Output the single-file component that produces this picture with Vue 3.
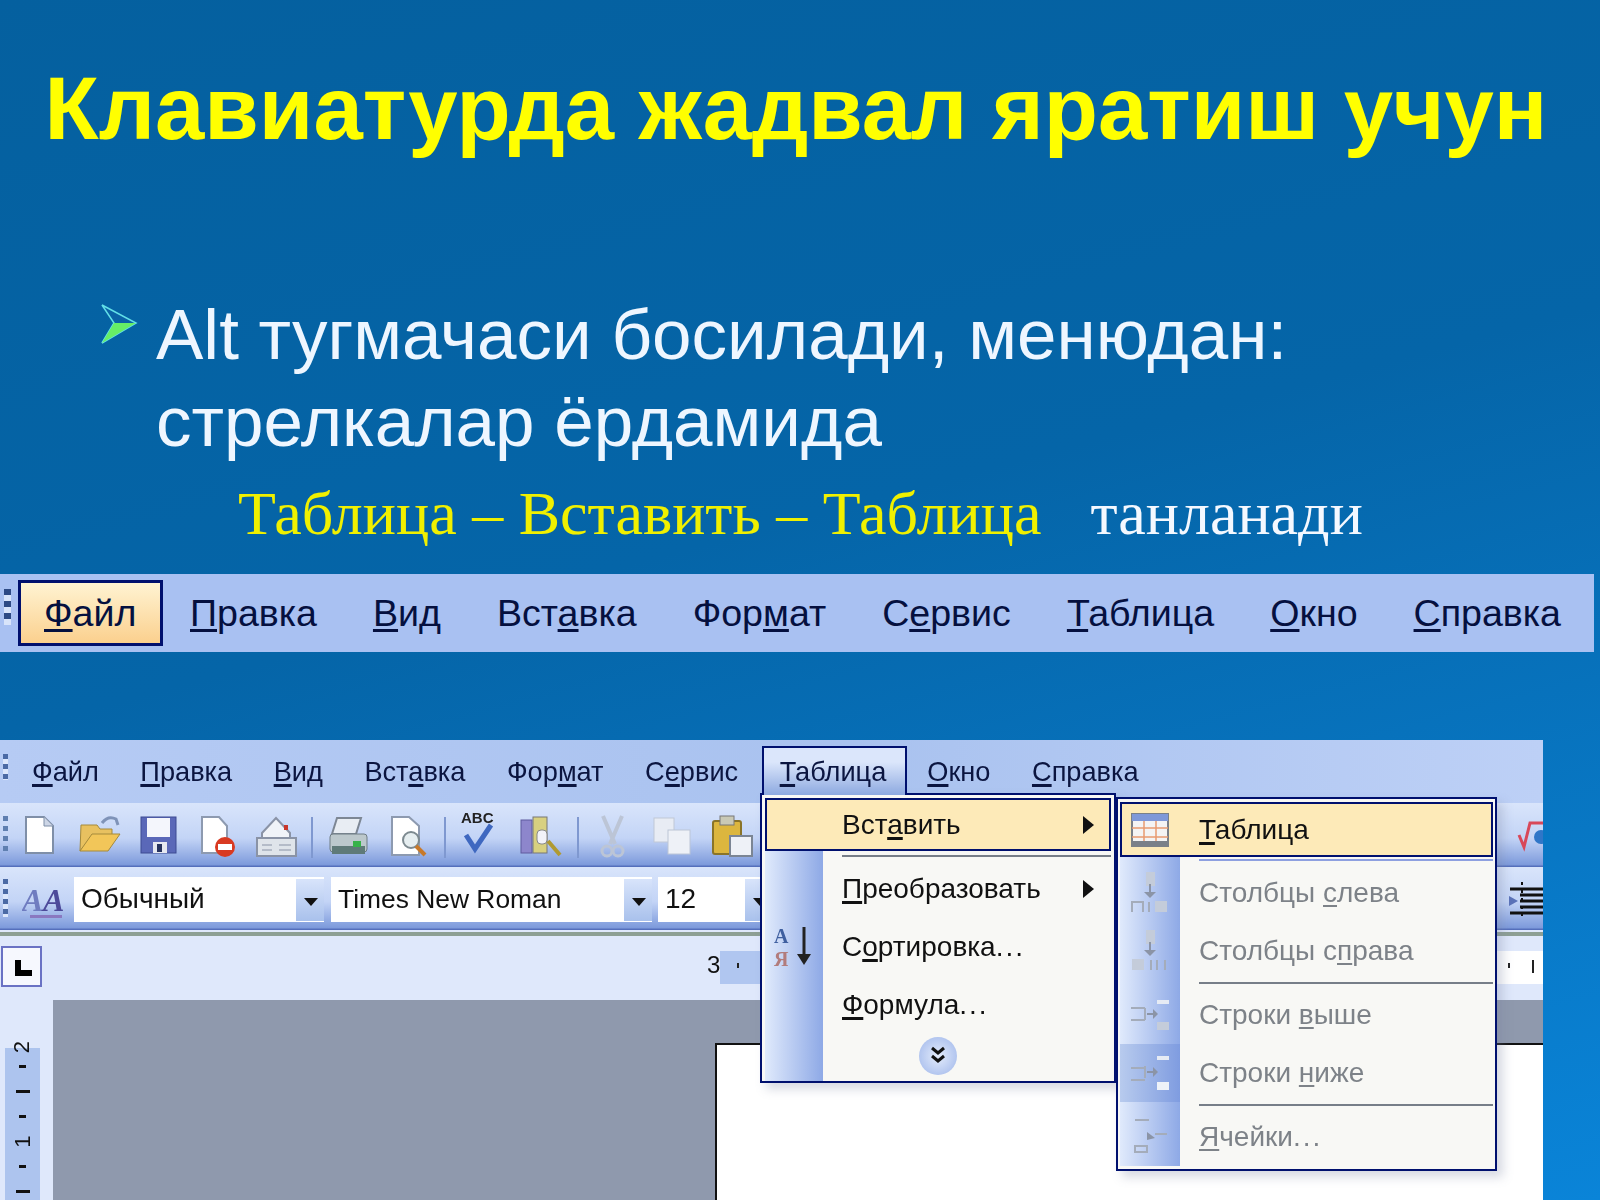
<template>
  <div class="slide">
    <h1 class="title">Клавиатурда жадвал яратиш учун</h1>

    <div class="bullet">
      <svg class="arrow" width="38" height="42" viewBox="0 0 38 42">
        <path d="M2 2 L36 20 L2 40 L14 20 Z" fill="#0a62a6" stroke="#62e0e8" stroke-width="1.5" />
        <path d="M2 40 L36 20 L14 20 Z" fill="#66ee66" />
      </svg>
      <p class="bullet-text">Alt тугмачаси босилади, менюдан:<br />стрелкалар ёрдамида</p>
    </div>

    <p class="sub">
      <span class="sub-yellow">Таблица – Вставить – Таблица</span>
      <span class="sub-white">танланади</span>
    </p>

    <nav class="big-menu">
      <span class="big-grip"></span>
      <span
        v-for="(m, i) in menuNames"
        :key="m.text"
        class="big-item"
        :class="{ active: i === 0 }"
      >{{ m.text.slice(0, m.u) }}<u>{{ m.text[m.u] }}</u>{{ m.text.slice(m.u + 1) }}</span>
    </nav>

    <section class="word">
      <div class="w-menubar">
        <span class="grip small"></span>
        <span
          v-for="m in menuNames"
          :key="m.text"
          class="w-item"
          :class="{ open: m.text === 'Таблица' }"
        >{{ m.text.slice(0, m.u) }}<u>{{ m.text[m.u] }}</u>{{ m.text.slice(m.u + 1) }}</span>
      </div>

      <div class="w-toolbar">
        <svg class="strip" width="1543" height="64" viewBox="0 0 1543 64">
          <g fill="#5f7fb0">
            <rect x="3" y="13" width="5" height="5" /><rect x="3" y="23" width="5" height="5" />
            <rect x="3" y="33" width="5" height="5" /><rect x="3" y="43" width="5" height="5" />
          </g>
          <!-- new -->
          <path d="M26 14h18l9 9v27H26z" fill="#fff" stroke="#7f8fa8" stroke-width="2" />
          <path d="M44 14v9h9" fill="#cdd6e6" stroke="#7f8fa8" />
          <!-- open -->
          <path d="M80 48l1-26h16l3 4h12v6H93z" fill="#e8c160" stroke="#a58a3c" />
          <path d="M80 48l12-17h28l-12 17z" fill="#f2c659" stroke="#a58a3c" />
          <path d="M102 20q6-8 14-4l2 6" fill="none" stroke="#7f93b8" stroke-width="3" />
          <!-- save -->
          <rect x="141" y="14" width="35" height="36" fill="#5a68b8" stroke="#3d4a92" />
          <rect x="147" y="15" width="23" height="19" fill="#f4f6fc" />
          <rect x="153" y="39" width="14" height="11" fill="#e6e8f0" /><rect x="157" y="41" width="5" height="8" fill="#26325e" />
          <!-- permission -->
          <path d="M202 14h17l8 9v27h-25z" fill="#fff" stroke="#8d9ab0" stroke-width="2" />
          <circle cx="225" cy="44" r="10" fill="#d93a22" /><rect x="218" y="41" width="14" height="6" fill="#fff" />
          <!-- mail -->
          <path d="M262 30l14-15 14 15v14h-28z" fill="#f0f3f8" stroke="#8a93a6" stroke-width="2" />
          <rect x="284" y="22" width="4" height="5" fill="#c9362c" />
          <rect x="257" y="35" width="39" height="18" fill="#dfe4ea" stroke="#8a93a6" stroke-width="2" />
          <path d="M262 42h10M262 47h10M279 42h12M279 47h12" stroke="#8a93a6" />
          <!-- sep -->
          <path d="M312 14v41M445 14v41M578 14v41" stroke="#7f98d0" stroke-width="2" />
          <!-- print -->
          <path d="M337 15h24l-5 16h-24z" fill="#e8edf3" stroke="#7d8794" stroke-width="2" />
          <rect x="330" y="31" width="37" height="18" rx="3" fill="#bcc8cc" stroke="#6f7c84" />
          <rect x="332" y="43" width="33" height="8" fill="#5f7a78" /><rect x="353" y="38" width="8" height="6" fill="#38b24a" />
          <!-- preview -->
          <path d="M392 14h17l10 9v29h-27z" fill="#fff" stroke="#8d9ab0" stroke-width="2" />
          <circle cx="411" cy="37" r="8" fill="#e6eef0" stroke="#7d8a90" stroke-width="2" />
          <path d="M416 43l9 9" stroke="#c8792a" stroke-width="4" />
          <!-- spell -->
          <text x="461" y="20" class="abc">ABC</text>
          <path d="M466 32l9 14 16-24" fill="none" stroke="#3f68c0" stroke-width="5" />
          <!-- research -->
          <rect x="521" y="17" width="11" height="33" fill="#8d86cc" stroke="#5f5a9e" />
          <rect x="533" y="14" width="14" height="36" fill="#d8d080" stroke="#777" />
          <rect x="537" y="27" width="10" height="14" rx="4" fill="#f2f2f8" stroke="#888" />
          <path d="M548 38l12 14" stroke="#b09a32" stroke-width="4" />
          <!-- cut -->
          <path d="M603 13l12 28M622 13l-12 28" stroke="#bcc5d6" stroke-width="4" />
          <circle cx="607" cy="48" r="5" fill="none" stroke="#bcc5d6" stroke-width="3" /><circle cx="618" cy="48" r="5" fill="none" stroke="#bcc5d6" stroke-width="3" />
          <!-- copy -->
          <rect x="654" y="15" width="20" height="24" fill="#e8ecf4" stroke="#c0c8d6" />
          <rect x="668" y="27" width="22" height="24" fill="#eef1f7" stroke="#bcc5d6" />
          <!-- paste -->
          <rect x="713" y="18" width="28" height="33" rx="2" fill="#dcb63e" stroke="#8a7428" stroke-width="2" />
          <rect x="720" y="13" width="14" height="9" fill="#c9c9b6" stroke="#777" />
          <rect x="730" y="33" width="22" height="20" fill="#eef1f7" stroke="#7b8594" stroke-width="2" />
          <!-- equation -->
          <path d="M1519 32l5 12 6-24h13" fill="none" stroke="#d8485a" stroke-width="3" />
          <circle cx="1541" cy="34" r="7" fill="#2f76c8" />
        </svg>
      </div>

      <div class="w-toolbar second">
        <span class="grip"></span>
        <svg class="aa" width="44" height="42" viewBox="0 0 44 42">
          <text x="0" y="33" class="aa-big">A</text>
          <text x="21" y="33" class="aa-small">A</text>
          <rect x="8" y="37" width="32" height="3" fill="#8a78c0" />
        </svg>
        <div class="combo style"><span>Обычный</span><i></i></div>
        <div class="combo font"><span>Times New Roman</span><i></i></div>
        <div class="combo size"><span>12</span><i></i></div>
        <svg class="indent" width="40" height="42" viewBox="0 0 40 42">
          <path d="M4 11h36M14 17h26M14 23h26M14 29h26M4 35h36" stroke="#111" stroke-width="3" />
          <path d="M16 4v34" stroke="#111" stroke-width="2" stroke-dasharray="3 5" />
          <path d="M3 18l9 5-9 5z" fill="#5a72b8" />
        </svg>
      </div>

      <div class="rule-line"></div>

      <div class="h-ruler">
        <span class="tab-box"><b></b></span>
        <span class="ruler-num">3</span>
        <span class="ruler-blue"><em></em></span>
        <span class="ruler-white"><em></em><em class="long"></em></span>
      </div>

      <div class="work">
        <div class="v-ruler">
          <div class="v-blue">
            <span class="v-num">2</span>
            <em></em><em class="long"></em><em></em>
            <span class="v-num one">1</span>
            <em></em><em class="long"></em>
          </div>
        </div>
        <div class="gray">
          <div class="page"></div>
        </div>
      </div>

      <!-- open menu: Таблица -->
      <div class="menu first">
        <div class="m-row hot">
          <span class="m-ico"></span>
          <span class="m-text">Вст<u>а</u>вить</span>
          <span class="m-arrow"></span>
        </div>
        <div class="m-sep top"></div>
        <div class="m-row">
          <span class="m-ico"></span>
          <span class="m-text"><u>П</u>реобразовать</span>
          <span class="m-arrow"></span>
        </div>
        <div class="m-row">
          <span class="m-ico">
            <svg width="46" height="48" viewBox="0 0 46 48">
              <text x="3" y="20" class="sort-a">A</text>
              <text x="3" y="43" class="sort-b">Я</text>
              <path d="M33 4v34" stroke="#222" stroke-width="3" />
              <path d="M26 31h14l-7 11z" fill="#222" />
            </svg>
          </span>
          <span class="m-text">С<u>о</u>ртировка<span class="dots">...</span></span>
        </div>
        <div class="m-row">
          <span class="m-ico"></span>
          <span class="m-text"><u>Ф</u>ормула<span class="dots">...</span></span>
        </div>
        <div class="m-more">
          <span class="more-btn">
            <svg width="16" height="20" viewBox="0 0 16 20">
              <path d="M2 2l6 5 6-5M2 10l6 5 6-5" fill="none" stroke="#111" stroke-width="3" />
            </svg>
          </span>
        </div>
      </div>

      <!-- submenu: Вставить -->
      <div class="menu second-menu">
        <div class="m-row hot">
          <span class="m-ico">
            <svg width="38" height="34" viewBox="0 0 38 34">
              <rect x="1" y="1" width="36" height="32" fill="#f4f4f4" stroke="#7a8088" stroke-width="2" />
              <rect x="1" y="1" width="36" height="7" fill="#7f98d8" />
              <path d="M1 15h36M1 24h36M13 8v25M25 8v25" stroke="#e89a70" stroke-width="1.5" />
              <rect x="1" y="28" width="36" height="5" fill="#7a8088" />
            </svg>
          </span>
          <span class="m-text"><u>Т</u>аблица</span>
        </div>
        <div class="m-sep top blue"></div>
        <template v-for="g in subItems" :key="g.text">
          <div class="m-row off">
            <span class="m-ico" :class="{ darker: g.dark }">
              <svg width="42" height="46" viewBox="0 0 42 46" v-html="g.icon"></svg>
            </span>
            <span class="m-text">{{ g.text.slice(0, g.u) }}<u>{{ g.text[g.u] }}</u>{{ g.text.slice(g.u + 1) }}<span v-if="g.dots" class="dots">...</span></span>
          </div>
          <div v-if="g.sep" class="m-sep"></div>
        </template>
      </div>
    </section>
  </div>
</template>

<script setup>
const menuNames = [
  { text: 'Файл', u: 0 },
  { text: 'Правка', u: 0 },
  { text: 'Вид', u: 0 },
  { text: 'Вставка', u: 3 },
  { text: 'Формат', u: 3 },
  { text: 'Сервис', u: 1 },
  { text: 'Таблица', u: 0 },
  { text: 'Окно', u: 0 },
  { text: 'Справка', u: 0 },
]

const colIcon = (a) => `
  <path d="M17 2h9v14h-9z" fill="#c4ccda"/><path d="M21 14v12" stroke="#8b94a6" stroke-width="2"/>
  <path d="M15 22l6 6 6-6" fill="#8b94a6"/>
  ${a ? '<path d="M3 42V32h11v10M20 42V32" fill="none" stroke="#a4acba" stroke-width="2"/><rect x="26" y="31" width="12" height="11" fill="#c4ccda"/>'
      : '<rect x="3" y="31" width="12" height="11" fill="#c4ccda"/><path d="M22 42V32M28 42V32M36 42V32" stroke="#a4acba" stroke-width="2"/>'}`

const rowIcon = (a) => `
  <path d="M2 ${a ? 16 : 18}h14M2 ${a ? 28 : 30}h14M16 16v12" fill="none" stroke="#a4acba" stroke-width="2"/>
  <path d="M18 22h8" stroke="#8b94a6" stroke-width="2"/><path d="M24 17l5 5-5 5z" fill="#8b94a6"/>
  <rect x="28" y="${a ? 8 : 6}" width="12" height="4" fill="#e6ebf4"/>
  <rect x="28" y="${a ? 30 : 32}" width="12" height="8" fill="${a ? '#c4ccda' : '#eef2f8'}"/>`

const cellIcon = `
  <path d="M6 6h14M26 20h12M6 38h12v-6H6z" fill="none" stroke="#a4acba" stroke-width="2"/>
  <path d="M18 18l8 6-8 2z" fill="#8b94a6"/>`

const subItems = [
  { text: 'Столбцы слева', u: 8, icon: colIcon(true) },
  { text: 'Столбцы справа', u: 9, icon: colIcon(false), sep: true },
  { text: 'Строки выше', u: 7, icon: rowIcon(true) },
  { text: 'Строки ниже', u: 7, icon: rowIcon(false), sep: true, dark: true },
  { text: 'Ячейки', u: 0, dots: true, icon: cellIcon },
]
</script>

<style scoped>
.slide {
  width: 1600px;
  height: 1200px;
  overflow: hidden;
  display: flex;
  flex-direction: column;
  background: linear-gradient(165deg, #05609f 0%, #0565a8 45%, #0a84d8 100%);
  font-family: "Liberation Sans", Arial, sans-serif;
}

.title {
  margin: 0;
  padding: 56px 8px 0 0;
  height: 243px;
  flex: none;
  box-sizing: border-box;
  text-align: center;
  font-size: 88.7px;
  line-height: 106px;
  font-weight: 700;
  color: #ffff00;
  white-space: nowrap;
}

.bullet {
  display: flex;
  padding: 48px 0 0 100px;
  height: 234px;
  flex: none;
  box-sizing: border-box;
}
.arrow {
  margin-top: 12px;
  flex: none;
}
.bullet-text {
  margin: 0 0 0 18px;
  font-size: 71px;
  line-height: 87px;
  color: #eef6ff;
  white-space: nowrap;
}

.sub {
  margin: 0;
  height: 97px;
  flex: none;
  box-sizing: border-box;
  padding: 0 0 0 238px;
  font-family: "Liberation Serif", "Times New Roman", serif;
  font-size: 62px;
  line-height: 72px;
  display: flex;
  gap: 49px;
}
.sub-yellow { color: #f0f000; }
.sub-white { color: #f4f8ff; }

/* enlarged menu bar */
.big-menu {
  width: 1594px;
  height: 78px;
  flex: none;
  background: #a9c1f2;
  display: flex;
  align-items: center;
  position: relative;
  font-size: 37.6px;
  color: #05103f;
  padding-left: 18px;
  box-sizing: border-box;
}
.big-grip {
  position: absolute;
  left: 4px;
  top: 15px;
  width: 7px;
  height: 36px;
  background: repeating-linear-gradient(#2d4a85 0 6px, #d8e4fa 6px 12px);
}
.big-item {
  margin-right: 56px;
  white-space: nowrap;
  flex: none;
}
.big-item.active {
  box-sizing: border-box;
  margin-right: 27px;
  width: 145px;
  height: 66px;
  padding: 9px 0 0 23px;
  border: 3px solid #00106e;
  background: linear-gradient(#fff3d2, #fbd08e);
}
u {
  text-decoration-thickness: 3px;
  text-underline-offset: 3px;
}

/* word window */
.word {
  position: relative;
  width: 1543px;
  height: 460px;
  margin-top: 88px;
  flex: none;
  font-size: 28px;
  color: #0b1540;
  background: #dfe8fb;
  overflow: hidden;
  filter: blur(0.35px);
}
.w-menubar {
  height: 63px;
  display: flex;
  align-items: center;
  padding-left: 32px;
  background: linear-gradient(90deg, #b6cbf4, #a9c2ef 55%, #bdd0f6);
  position: relative;
  box-sizing: border-box;
  font-size: 27.2px;
}
.w-item {
  margin-right: 41.5px;
  white-space: nowrap;
}
.w-item.open {
  margin: 6px 20px 0 -18px;
  height: 49px;
  padding: 8px 19px 0 16px;
  box-sizing: border-box;
  border: 2px solid #00106e;
  border-bottom: 0;
  background: linear-gradient(#dbe6fb 30%, #8da9e0);
  align-self: flex-start;
  z-index: 3;
}
.grip {
  position: absolute;
  left: 3px;
  top: 12px;
  width: 5px;
  height: 38px;
  background: repeating-linear-gradient(#4b6aa5 0 5px, #dbe6fb 5px 10px);
}
.grip.small {
  top: 14px;
  height: 26px;
}
.w-toolbar {
  height: 64px;
  background: linear-gradient(#d9e5fb, #c3d4f6 55%, #7e9bdc 96%, #4a64b4);
  position: relative;
}
.strip {
  display: block;
}
.abc {
  font: 700 15px "Liberation Sans", sans-serif;
  fill: #222;
}
.w-toolbar.second {
  height: 63px;
  display: flex;
  align-items: center;
  padding: 1px 0 0 22px;
  box-sizing: border-box;
}
.aa { flex: none; }
.aa-big {
  font: italic 700 32px "Liberation Serif", serif;
  fill: #6f7cc0;
}
.aa-small {
  font: italic 700 32px "Liberation Serif", serif;
  fill: #4d4a9a;
}
.combo {
  height: 45px;
  background: #fff;
  display: flex;
  align-items: center;
  padding-left: 7px;
  box-sizing: border-box;
  flex: none;
  position: relative;
  white-space: nowrap;
  color: #111;
}
.combo i {
  position: absolute;
  right: 0;
  top: 2px;
  bottom: 1px;
  width: 28px;
  background: linear-gradient(#d8e4fb, #a9c1ec);
}
.combo i::after {
  content: "";
  position: absolute;
  left: 8px;
  top: 19px;
  border: 7px solid transparent;
  border-top: 8px solid #111;
  border-bottom: 0;
}
.combo.style { width: 250px; margin-left: 8px; }
.combo.font { width: 321px; margin-left: 7px; font-size: 26.4px; }
.combo.size { width: 115px; margin-left: 6px; }
.indent {
  margin-left: 733px;
  flex: none;
}
.rule-line {
  height: 4px;
  margin-top: 2px;
  background: #8d9f94;
  margin-bottom: -1px;
}
.h-ruler {
  height: 65px;
  display: flex;
  align-items: center;
  position: relative;
}
.tab-box {
  position: absolute;
  left: 1px;
  top: 11px;
  width: 41px;
  height: 41px;
  box-sizing: border-box;
  border: 2px solid #6a72c4;
  background: #f6f8fe;
}
.tab-box b {
  position: absolute;
  left: 12px;
  top: 12px;
  width: 6px;
  height: 16px;
  background: #000;
}
.tab-box b::after {
  content: "";
  position: absolute;
  left: 0;
  bottom: 0;
  width: 17px;
  height: 6px;
  background: #000;
}
.ruler-num {
  position: absolute;
  left: 707px;
  top: 16px;
  font-size: 24px;
  color: #111;
}
.ruler-blue {
  position: absolute;
  left: 720px;
  top: 16px;
  width: 45px;
  height: 33px;
  background: #b0c6f0;
}
.ruler-blue em,
.ruler-white em {
  position: absolute;
  left: 17px;
  top: 12px;
  width: 2px;
  height: 5px;
  background: #222;
}
.ruler-white {
  position: absolute;
  left: 1496px;
  top: 16px;
  width: 47px;
  height: 33px;
  background: #fff;
}
.ruler-white em { left: 12px; }
.ruler-white em.long {
  left: 36px;
  top: 9px;
  height: 13px;
}
.work {
  flex: 1;
  display: flex;
  height: 200px;
}
.v-ruler {
  width: 53px;
  flex: none;
  padding: 48px 0 0 5px;
  box-sizing: border-box;
  background: #dfe8fb;
}
.v-blue {
  width: 35px;
  height: 152px;
  background: #adc4ee;
  display: flex;
  flex-direction: column;
  align-items: center;
  position: relative;
  padding-top: 17px;
  box-sizing: border-box;
  gap: 22px;
}
.v-blue em {
  width: 7px;
  height: 3px;
  background: #111;
  flex: none;
}
.v-blue em.long { width: 14px; }
.v-num {
  position: absolute;
  top: -14px;
  font-size: 22px;
  color: #111;
  transform: rotate(-90deg);
}
.v-num.one {
  position: static;
  height: 3px;
  line-height: 3px;
  transform: rotate(-90deg);
}
.gray {
  flex: 1;
  background: #8f99ad;
  padding: 43px 0 0 662px;
  box-sizing: border-box;
}
.page {
  height: 157px;
  background: #fff;
  border-top: 2px solid #111;
  border-left: 2px solid #111;
}

/* menus over the window */
.menu {
  position: absolute;
  box-sizing: border-box;
  border: 2px solid #00106e;
  background: #f8f8f5;
  box-shadow: 6px 6px 10px rgba(120, 130, 160, 0.3);
  color: #111;
  z-index: 2;
  --col: 58px;
  --text-x: 77px;
}
.menu.first {
  left: 760px;
  top: 53px;
  width: 356px;
  height: 290px;
  padding: 3px;
}
.second-menu {
  left: 1116px;
  top: 57px;
  width: 381px;
  height: 374px;
  padding: 3px 2px;
  --col: 60px;
  --text-x: 79px;
}
.m-row {
  display: flex;
  align-items: center;
  height: 58px;
  position: relative;
}
.m-row.hot {
  height: 53px;
  background: #fdeab8;
  outline: 2px solid #00106e;
  outline-offset: -2px;
}
.second-menu .m-row.hot { height: 55px; }
.m-ico {
  width: var(--col);
  height: 100%;
  flex: none;
  display: flex;
  align-items: center;
  justify-content: center;
  background: linear-gradient(90deg, #e0eafc, #8ea9e6);
}
.m-row.hot .m-ico {
  background: none;
}
.m-ico.darker {
  background: linear-gradient(90deg, #b8cbee, #7f9ce0);
}
.m-text {
  margin-left: 19px;
  white-space: nowrap;
}
.dots { letter-spacing: 2px; }
.m-arrow {
  position: absolute;
  right: 17px;
  top: 50%;
  margin-top: -9px;
  border: 9px solid transparent;
  border-left: 11px solid #111;
  border-right: 0;
}
.m-sep {
  height: 6px;
  background:
    linear-gradient(#777e88, #777e88) var(--text-x) 2px / 100% 2px no-repeat,
    linear-gradient(90deg, #e0eafc, #8ea9e6) 0 0 / var(--col) 100% no-repeat;
}
.m-sep.top {
  height: 9px;
  background-position: var(--text-x) 4px, 0 0;
}
.m-sep.top.blue {
  height: 7px;
  background:
    linear-gradient(#8ea0e0, #8ea0e0) var(--text-x) 2px / 100% 2px no-repeat,
    linear-gradient(90deg, #e0eafc, #8ea9e6) 0 0 / var(--col) 100% no-repeat;
}
.m-row.off { color: #7d8288; }
.m-row.off u { text-decoration-thickness: 2px; }
.m-more {
  height: 47px;
  display: flex;
  background: linear-gradient(90deg, #e0eafc, #8ea9e6) 0 0 / var(--col) 100% no-repeat;
  justify-content: center;
}
.more-btn {
  width: 38px;
  height: 38px;
  margin-top: 3px;
  border-radius: 50%;
  background: radial-gradient(circle, #e4ecfb, #9db5ea);
  display: flex;
  align-items: center;
  justify-content: center;
}
.sort-a {
  font: 700 20px "Liberation Serif", serif;
  fill: #3f5f9f;
}
.sort-b {
  font: 700 20px "Liberation Serif", serif;
  fill: #b27c7c;
}
</style>
